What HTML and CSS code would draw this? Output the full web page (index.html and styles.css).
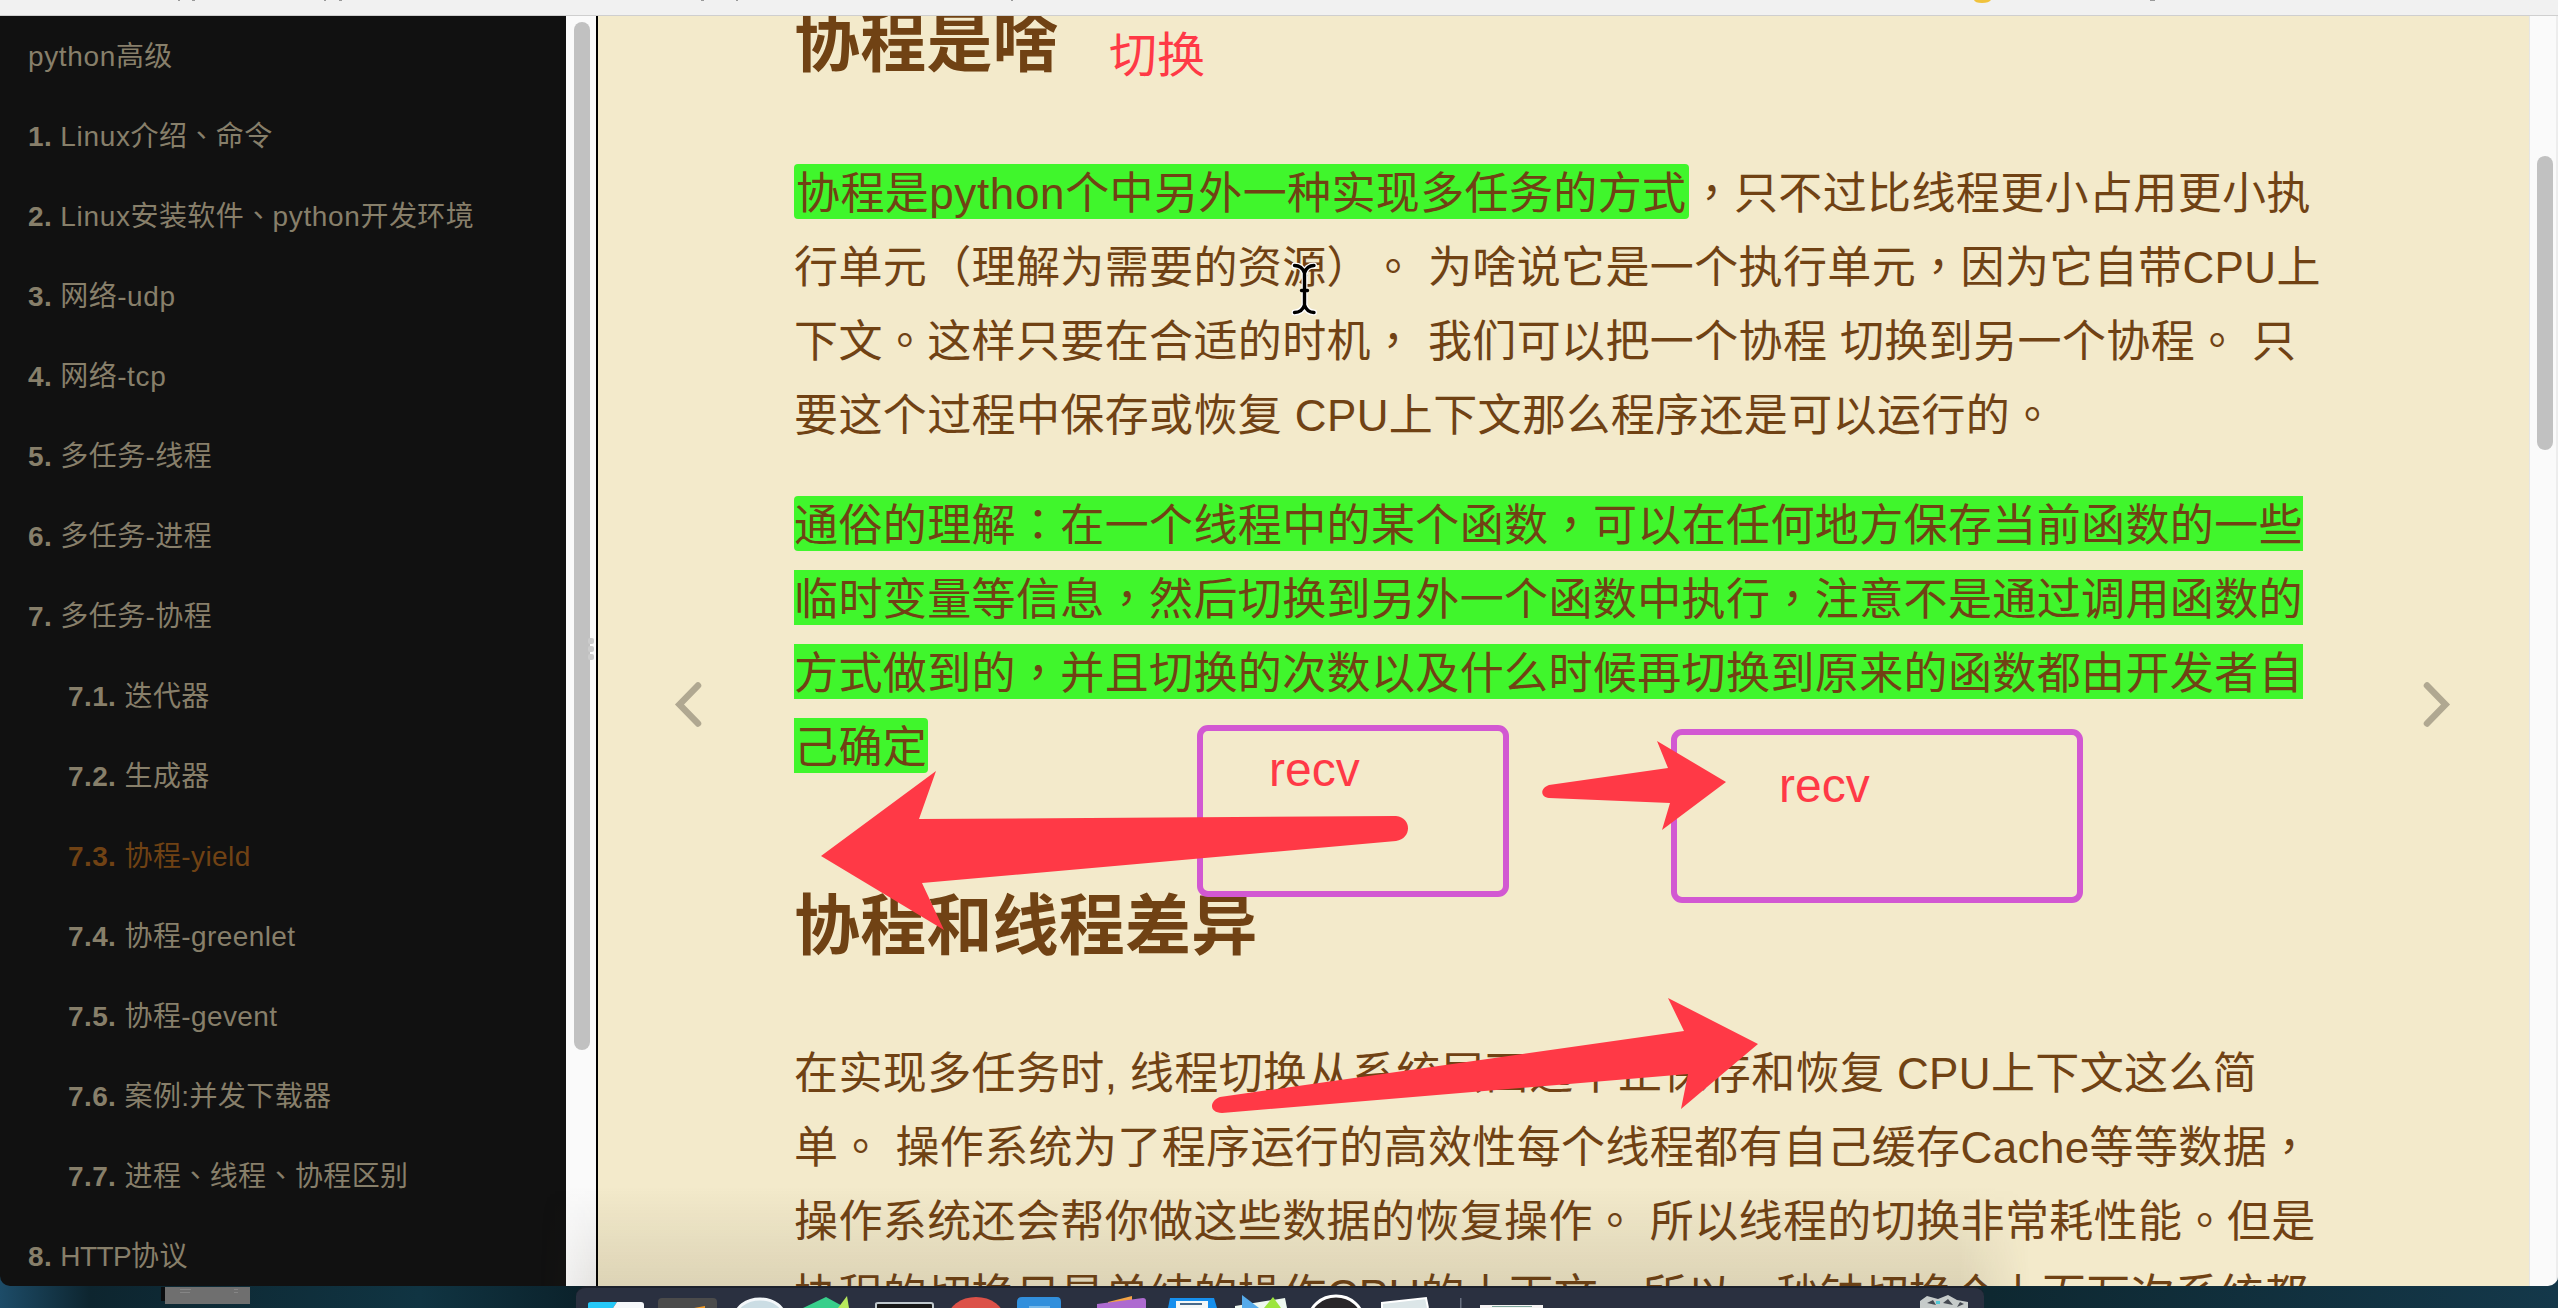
FILE: index.html
```html
<!DOCTYPE html>
<html lang="zh-CN">
<head>
<meta charset="utf-8">
<title>协程-yield</title>
<link rel="stylesheet" href="styles.css">
</head>
<body>
<div class="window">
  <div class="toolbar"></div>
  <div class="main">
    <nav class="sidebar">
      <a class="item"><span class="latin">python</span>高级</a>
      <a class="item"><b>1.</b> <span class="latin">Linux</span>介绍<span lang="zh-TW">、</span>命令</a>
      <a class="item"><b>2.</b> <span class="latin">Linux</span>安装软件<span lang="zh-TW">、</span><span class="latin">python</span>开发环境</a>
      <a class="item"><b>3.</b> 网络<span class="latin">-udp</span></a>
      <a class="item"><b>4.</b> 网络<span class="latin">-tcp</span></a>
      <a class="item"><b>5.</b> 多任务-线程</a>
      <a class="item"><b>6.</b> 多任务-进程</a>
      <a class="item"><b>7.</b> 多任务-协程</a>
      <a class="item sub"><b>7.1.</b> 迭代器</a>
      <a class="item sub"><b>7.2.</b> 生成器</a>
      <a class="item sub active"><b>7.3.</b> 协程-yield</a>
      <a class="item sub"><b>7.4.</b> 协程-greenlet</a>
      <a class="item sub"><b>7.5.</b> 协程-gevent</a>
      <a class="item sub"><b>7.6.</b> 案例:并发下载器</a>
      <a class="item sub"><b>7.7.</b> 进程<span lang="zh-TW">、</span>线程<span lang="zh-TW">、</span>协程区别</a>
      <a class="item"><b>8.</b> <span class="caps">HTTP</span>协议</a>
    </nav>
    <div class="track side-track"><div class="thumb side-thumb"></div><div class="grip"><i></i><i></i><i></i></div></div>
    <article class="page">
      <h2 class="first">协程是啥</h2>
      <p><mark class="inset">协程是<span class="latin">python</span>个中另外一种实现多任务的方式</mark><span lang="zh-TW">，</span>只不过比线程更小占用更小执<br>行单元（理解为需要的资源）<span lang="zh-TW">。</span> 为啥说它是一个执行单元<span lang="zh-TW">，</span>因为它自带CPU上<br>下文<span lang="zh-TW">。</span>这样只要在合适的时机<span lang="zh-TW">，</span> 我们可以把一个协程 切换到另一个协程<span lang="zh-TW">。</span> 只<br>要这个过程中保存或恢复 CPU上下文那么程序还是可以运行的<span lang="zh-TW">。</span></p>
      <p><mark>通俗的理解<span lang="zh-TW">：</span>在一个线程中的某个函数<span lang="zh-TW">，</span>可以在任何地方保存当前函数的一些<br>临时变量等信息<span lang="zh-TW">，</span>然后切换到另外一个函数中执行<span lang="zh-TW">，</span>注意不是通过调用函数的<br>方式做到的<span lang="zh-TW">，</span>并且切换的次数以及什么时候再切换到原来的函数都由开发者自<br>己确定</mark></p>
      <h2>协程和线程差异</h2>
      <p>在实现多任务时, 线程切换从系统层面远不止保存和恢复 CPU上下文这么简<br>单<span lang="zh-TW">。</span> 操作系统为了程序运行的高效性每个线程都有自己缓存Cache等等数据<span lang="zh-TW">，</span><br>操作系统还会帮你做这些数据的恢复操作<span lang="zh-TW">。</span> 所以线程的切换非常耗性能<span lang="zh-TW">。</span>但是<br>协程的切换只是单纯的操作CPU的上下文<span lang="zh-TW">，</span>所以一秒钟切换个上百万次系统都</p>
    </article>
    <div class="track page-track"><div class="thumb page-thumb"></div></div>
  </div>
</div>
<div class="dock-shade"></div>
<div class="dock"></div>
<div class="note note-switch">切换</div>
<div class="note note-left">recv</div>
<div class="note note-right">recv</div>
<svg class="overlay" width="2558" height="1308" viewBox="0 0 2558 1308">
  <g fill="none" stroke="#d258d2" stroke-width="6">
    <rect x="1200" y="728" width="306" height="166" rx="8"/>
    <rect x="1674" y="732" width="406" height="168" rx="8"/>
  </g>
  <g fill="#ff3946">
    <path d="M821 856L936 771L919 819L1396 816C1412 818 1412 838 1396 841L922 883L944 930Z"/>
    <path d="M1726 782L1657 741L1668 768L1549 785C1540 788 1540 797 1549 798L1670 803L1662 830Z"/>
    <path d="M1758 1044L1668 998L1684 1031L1220 1097C1209 1101 1209 1113 1222 1113L1688 1074L1681 1109Z"/>
  </g>
  <g fill="none" stroke="#b0a891" stroke-width="6.500" stroke-linecap="round" stroke-linejoin="miter">
    <path d="M698 685.500L679.500 704.500L698 723.500"/>
    <path d="M2427 685.500L2445.500 704.500L2427 723.500"/>
  </g>
  <g fill="none" stroke-linecap="round">
    <path stroke="#fff" stroke-width="6" d="M1294.500 265.500Q1302 265.500 1304.500 273V305Q1302 312.500 1294.500 312.500M1314 265.500Q1307 265.500 1304.500 273M1304.500 305Q1307 312.500 1314 312.500"/>
    <path stroke="#000" stroke-width="3.400" d="M1294.500 265.500Q1302 265.500 1304.500 273V305Q1302 312.500 1294.500 312.500M1314 265.500Q1307 265.500 1304.500 273M1304.500 305Q1307 312.500 1314 312.500M1301.500 290.500H1307.500"/>
  </g>
  <g fill="#9a9a9a">
    <rect x="178" y="0" width="2" height="1"/><rect x="192" y="0" width="3" height="1"/><rect x="324" y="0" width="2" height="1"/><rect x="339" y="0" width="3" height="1"/><rect x="701" y="0" width="3" height="1"/><rect x="736" y="0" width="2" height="1"/><rect x="1011" y="0" width="2" height="1"/><rect x="2150" y="0" width="5" height="1"/>
  </g>
  <path fill="#f0c23c" d="M1974 0H1991Q1989 3 1982 3T1974 0Z"/>
  <g>
    <path fill="#0b0d0f" d="M161 1287h6v14h-6z"/><path fill="#6f6f6f" d="M165 1287h85v17h-85z"/><path fill="#858585" d="M180 1289h11v1h-11zM180 1292h10v1h-10zM234 1289h4v1h-4zM234 1292h4v1h-4z"/>
    <path fill="#25c8f8" d="M588 1308V1304Q588 1302 591 1302H617L613 1308Z"/><path fill="#f5f7fa" d="M613 1308L617 1302H641Q644 1302 644 1305V1308Z"/>
    <path fill="#4b4b4b" d="M658 1308V1302Q658 1298 662 1298H713Q717 1298 717 1302V1308Z"/><path fill="#f39a25" d="M694 1308L705 1306V1308Z"/>
    <ellipse cx="760" cy="1318" rx="25" ry="19" fill="#cbdde4" stroke="#f3f7fa" stroke-width="3"/>
    <path fill="#38cf8b" d="M803 1308L826 1297L846 1308Z"/><path fill="#b8e95d" d="M838 1308L847 1296L849 1308Z"/>
    <path fill="#171717" stroke="#bfc7cc" stroke-width="2" d="M876 1310V1304Q876 1303 878 1303H931Q933 1303 933 1305V1310"/>
    <ellipse cx="976" cy="1318" rx="28" ry="21" fill="#dc5148"/>
    <path fill="#318fdc" d="M1017 1308V1302Q1017 1297 1022 1297H1057Q1061 1297 1061 1302V1308Z"/><path fill="#76b8e9" d="M1029 1306h21v2h-21z"/>
    <path fill="#f3a445" d="M1108 1302L1132 1296V1308H1108Z"/><path fill="#ae6bd0" d="M1097 1304L1143 1298Q1146 1298 1146 1301V1308H1097Z"/>
    <path fill="#168fed" d="M1168 1308L1170 1298H1214L1217 1308Z"/><path fill="#f3f7f7" d="M1176 1301h32v7h-32z"/><path fill="#47698a" d="M1180 1303h22v2h-22z"/>
    <path fill="#eef8f0" d="M1235 1306L1285 1298L1287 1308H1235Z"/><path fill="#55aaea" d="M1242 1295L1259 1308H1242Z"/><path fill="#9be53c" d="M1264 1308L1273 1297L1281 1308Z"/>
    <ellipse cx="1336" cy="1320" rx="27" ry="24" fill="#292629" stroke="#fff" stroke-width="3"/>
    <path fill="#dce6e8" stroke="#fff" stroke-width="2" d="M1382 1308V1303L1426 1298L1428 1308"/>
    <path fill="#697080" d="M1460 1298h1.500v10h-1.500z"/>
    <path fill="#f4f2f2" d="M1480 1305h63v3h-63z"/><path fill="#7ca69b" d="M1492 1306h40v1h-40z"/>
    <path fill="#c6cbca" d="M1920 1308V1301L1927 1296L1938 1299L1948 1295L1957 1300L1968 1302V1308Z"/><path fill="#454951" d="M1927 1303l6-3 3 5zM1943 1303l5-4 5 6zM1957 1307l3-5 4 2z"/><path fill="#51c8d6" d="M1936 1301h4v3h-4z"/>
  </g>
</svg>
</body>
</html>
```
FILE: styles.css
```css
* { box-sizing: border-box; }
body {
  margin: 0;
  width: 2558px;
  height: 1308px;
  overflow: hidden;
  position: relative;
  background: linear-gradient(90deg, #1d4c68 0, #0d252f 90px, #103442 420px, #0b222b 580px, #0e2831 1990px, #14384a 2558px);
  font-family: "Liberation Sans", "Noto Sans CJK TC", sans-serif;
  text-spacing-trim: space-all;
}
.window {
  height: 1286px;
  display: flex;
  flex-direction: column;
  overflow: hidden;
  border-radius: 0 0 10px 10px;
}
.toolbar { flex: 0 0 16px; background: #f1f1f1; border-bottom: 1px solid #cfcfcf; }
.main { flex: 1; min-height: 0; display: flex; }
.sidebar { flex: 0 0 566px; padding-top: 1px; background: #111; color: #877f6a; font-size: 28px; letter-spacing: 0.4px; overflow: hidden; }
.item { display: block; height: 80px; line-height: 80px; padding-left: 28px; white-space: nowrap; }
.sub { padding-left: 68px; }
.active { color: #704214; }
.latin { letter-spacing: 0.65px; }
.caps { letter-spacing: -0.6px; }
.track { background: #fafafa; position: relative; flex: none; }
.side-track { width: 32px; border-right: 2px solid #000; padding: 6px 0 0 8px; }
.page-track { width: 29px; border-left: 1px solid #e6e6e6; border-right: 2px solid #ededed; padding: 140px 0 0 7px; }
.thumb { width: 16px; border-radius: 8px; background: #c1c1c1; }
.side-thumb { height: 1028px; }
.page-thumb { height: 294px; }
.grip { position: absolute; left: 22px; top: 622px; display: grid; gap: 2px; }
.grip i { width: 6px; height: 6px; border-radius: 2px; background: #ccc; }
.page {
  flex: 1;
  min-width: 0;
  background: #f3eacb;
  color: #704214;
  padding-left: 196px;
  font-size: 44px;
  letter-spacing: 0.38px;
  line-height: 74px;
  white-space: nowrap;
  overflow: hidden;
}
.page p { margin: 0 0 36px; }
.page h2 { margin: 104px 0 74px; font-size: 66px; line-height: 74px; letter-spacing: 0.2px; font-weight: 700; }
.page h2.first { margin: -10px 0 77px; }
mark { background: #40f62c; color: inherit; border-radius: 4px; padding: 5px 1px 1px 0; }
mark.inset { padding-left: 2px; padding-right: 3px; }
.dock-shade {
  position: absolute;
  left: 540px; top: 1186px; width: 1490px; height: 100px;
  background: linear-gradient(transparent, rgba(60, 50, 30, 0.12));
  -webkit-mask-image: linear-gradient(90deg, transparent, #000 60px, #000 1420px, transparent);
  mask-image: linear-gradient(90deg, transparent, #000 60px, #000 1420px, transparent);
}
.dock { position: absolute; left: 576px; top: 1286px; width: 1408px; height: 40px; border-radius: 10px 10px 0 0; background: #2a3040; border-top: 2px solid #1c212c; }
.overlay { position: absolute; left: 0; top: 0; }
.note { position: absolute; color: #ff3946; font-size: 48px; line-height: 56px; white-space: nowrap; }
.note-switch { left: 1109px; top: 28px; }
.note-left { left: 1269px; top: 742px; }
.note-right { left: 1779px; top: 758px; }
```
